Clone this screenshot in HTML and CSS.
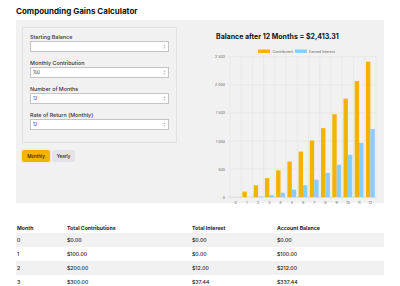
FILE: index.html
```html
<!DOCTYPE html>
<html lang="en">
<head>
  <meta charset="UTF-8" />
  <title>Compounding Gains Calculator</title>
  <link rel="stylesheet" href="styles.css">
</head>
<body>
  <h1 class="title">Compounding Gains Calculator</h1>

  <div class="panel">
    <div class="inputs-col">
      <div class="form-card">
        <div class="field">
          <label>Starting Balance</label>
          <div class="input"><span class="value"></span><svg class="spin" viewBox="0 0 4 7"><path d="M2 0.5 L3.5 2.6 H0.5 Z M2 6.5 L3.5 4.4 H0.5 Z"/></svg></div>
        </div>
        <div class="field">
          <label>Monthly Contribution</label>
          <div class="input"><span class="value">100</span><svg class="spin" viewBox="0 0 4 7"><path d="M2 0.5 L3.5 2.6 H0.5 Z M2 6.5 L3.5 4.4 H0.5 Z"/></svg></div>
        </div>
        <div class="field">
          <label>Number of Months</label>
          <div class="input"><span class="value">12</span><svg class="spin" viewBox="0 0 4 7"><path d="M2 0.5 L3.5 2.6 H0.5 Z M2 6.5 L3.5 4.4 H0.5 Z"/></svg></div>
        </div>
        <div class="field">
          <label>Rate of Return (Monthly)</label>
          <div class="input"><span class="value">12</span><svg class="spin" viewBox="0 0 4 7"><path d="M2 0.5 L3.5 2.6 H0.5 Z M2 6.5 L3.5 4.4 H0.5 Z"/></svg></div>
        </div>
      </div>

      <div class="toggle">
        <button class="tab active">Monthly</button>
        <button class="tab">Yearly</button>
      </div>
    </div>

    <div class="chart-col">
      <h2 class="chart-title">Balance after 12 Months = $2,413.31</h2>
      <svg class="chart" width="168" height="161" viewBox="210 42 168 161">
        <!-- legend -->
        <rect x="258" y="49.5" width="12" height="3.5" fill="#f5b301"/>
        <text class="legend" x="272.5" y="52.6">Contributed</text>
        <rect x="295" y="49.5" width="12" height="3.5" fill="#87cefa"/>
        <text class="legend" x="309" y="52.6">Earned Interest</text>

        <!-- horizontal grid -->
        <g class="grid">
          <line x1="228" x2="376" y1="56.7" y2="56.7"/>
          <line x1="228" x2="376" y1="84.8" y2="84.8"/>
          <line x1="228" x2="376" y1="112.9" y2="112.9"/>
          <line x1="228" x2="376" y1="141" y2="141"/>
          <line x1="228" x2="376" y1="169.1" y2="169.1"/>
        </g>
        <!-- vertical grid -->
        <g class="grid">
          <line x1="230" x2="230" y1="56.7" y2="199.5"/>
          <line x1="241.23" x2="241.23" y1="56.7" y2="199.5"/>
          <line x1="252.46" x2="252.46" y1="56.7" y2="199.5"/>
          <line x1="263.69" x2="263.69" y1="56.7" y2="199.5"/>
          <line x1="274.92" x2="274.92" y1="56.7" y2="199.5"/>
          <line x1="286.15" x2="286.15" y1="56.7" y2="199.5"/>
          <line x1="297.38" x2="297.38" y1="56.7" y2="199.5"/>
          <line x1="308.61" x2="308.61" y1="56.7" y2="199.5"/>
          <line x1="319.84" x2="319.84" y1="56.7" y2="199.5"/>
          <line x1="331.07" x2="331.07" y1="56.7" y2="199.5"/>
          <line x1="342.3" x2="342.3" y1="56.7" y2="199.5"/>
          <line x1="353.53" x2="353.53" y1="56.7" y2="199.5"/>
          <line x1="364.76" x2="364.76" y1="56.7" y2="199.5"/>
          <line x1="376" x2="376" y1="56.7" y2="199.5"/>
        </g>
        <line class="axis" x1="228" x2="376" y1="197.2" y2="197.2"/>

        <!-- y labels -->
        <g class="tick" text-anchor="end">
          <text x="225" y="58.2">2 500</text>
          <text x="225" y="86.3">2 000</text>
          <text x="225" y="114.4">1 500</text>
          <text x="225" y="142.5">1 000</text>
          <text x="225" y="170.6">500</text>
          <text x="225" y="198.7">0</text>
        </g>

        <!-- x labels -->
        <g class="tick" text-anchor="middle">
          <text x="235.6" y="203.5">0</text>
          <text x="246.8" y="203.5">1</text>
          <text x="258.1" y="203.5">2</text>
          <text x="269.3" y="203.5">3</text>
          <text x="280.5" y="203.5">4</text>
          <text x="291.8" y="203.5">5</text>
          <text x="303" y="203.5">6</text>
          <text x="314.2" y="203.5">7</text>
          <text x="325.4" y="203.5">8</text>
          <text x="336.7" y="203.5">9</text>
          <text x="347.9" y="203.5">10</text>
          <text x="359.1" y="203.5">11</text>
          <text x="370.4" y="203.5">12</text>
        </g>

        <!-- balance bars -->
        <g fill="#f5b301">
          <rect x="242.4" y="191.6" width="4.4" height="5.6"/>
          <rect x="253.7" y="185.3" width="4.4" height="11.9"/>
          <rect x="264.9" y="178.2" width="4.4" height="19"/>
          <rect x="276.1" y="170.3" width="4.4" height="26.9"/>
          <rect x="287.4" y="161.5" width="4.4" height="35.7"/>
          <rect x="298.6" y="151.6" width="4.4" height="45.6"/>
          <rect x="309.8" y="140.5" width="4.4" height="56.7"/>
          <rect x="321" y="128.1" width="4.4" height="69.1"/>
          <rect x="332.3" y="114.2" width="4.4" height="83"/>
          <rect x="343.5" y="98.6" width="4.4" height="98.6"/>
          <rect x="354.7" y="81.1" width="4.4" height="116.1"/>
          <rect x="366" y="61.6" width="4.4" height="135.6"/>
        </g>

        <!-- interest bars -->
        <g fill="#87cefa">
          <rect x="258.1" y="196.5" width="4.4" height="0.7"/>
          <rect x="269.3" y="195.1" width="4.4" height="2.1"/>
          <rect x="280.5" y="192.8" width="4.4" height="4.4"/>
          <rect x="291.8" y="189.6" width="4.4" height="7.6"/>
          <rect x="303" y="185.3" width="4.4" height="11.9"/>
          <rect x="314.2" y="179.8" width="4.4" height="17.4"/>
          <rect x="325.4" y="173" width="4.4" height="24.2"/>
          <rect x="336.7" y="164.7" width="4.4" height="32.5"/>
          <rect x="347.9" y="154.8" width="4.4" height="42.4"/>
          <rect x="359.1" y="142.9" width="4.4" height="54.3"/>
          <rect x="370.4" y="129" width="4.4" height="68.2"/>
        </g>
      </svg>
    </div>
  </div>

  <table class="results">
    <thead>
      <tr>
        <th class="c-month">Month</th>
        <th class="c-contrib">Total Contributions</th>
        <th class="c-interest">Total Interest</th>
        <th class="c-balance">Account Balance</th>
      </tr>
    </thead>
    <tbody>
      <tr><td>0</td><td>$0.00</td><td>$0.00</td><td>$0.00</td></tr>
      <tr><td>1</td><td>$100.00</td><td>$0.00</td><td>$100.00</td></tr>
      <tr><td>2</td><td>$200.00</td><td>$12.00</td><td>$212.00</td></tr>
      <tr><td>3</td><td>$300.00</td><td>$37.44</td><td>$337.44</td></tr>
    </tbody>
  </table>
</body>
</html>
```

FILE: styles.css
```css
* {
  box-sizing: border-box;
}

body {
  margin: 0;
  padding: 0;
  font-family: 'Inter', 'Noto Sans', sans-serif;
  background: #ffffff;
  color: #222;
}

.title {
  margin: 0;
  padding: 6px 16px 0;
  height: 20px;
  font-size: 8px;
  line-height: 11px;
  font-weight: 700;
  color: #111;
}

.panel {
  margin: 0 16px;
  height: 183px;
  padding: 7px 6px;
  background: #f1f1f1;
  display: flex;
  gap: 33px;
}

.inputs-col {
  width: 155px;
  flex-shrink: 0;
}

.form-card {
  height: 116px;
  border: 1px solid #e2e2e2;
  padding: 6px 7px 12px;
}

.field {
  margin-bottom: 8px;
}

.field label {
  display: block;
  height: 6px;
  line-height: 6px;
  margin-bottom: 1px;
  font-size: 5.4px;
  font-weight: 500;
  color: #333;
}

.input {
  height: 11px;
  background: #fff;
  border: 1px solid #c4c4c4;
  display: flex;
  align-items: center;
  padding: 0 2px 0 2px;
}

.input .value {
  flex: 1;
  font-size: 4.2px;
  color: #333;
}

.spin {
  width: 3px;
  height: 5px;
  fill: #b5b5b5;
}

.toggle {
  margin-top: 7px;
  display: flex;
  gap: 2px;
}

.tab {
  height: 12px;
  padding: 0;
  border: none;
  border-radius: 2px;
  font-family: inherit;
  font-size: 4.5px;
  font-weight: 500;
  color: #222;
  background: #e4e4e8;
  cursor: pointer;
}

.tab.active {
  width: 28px;
  background: #f5b301;
  box-shadow: 0 0 0 0.6px #fbe2a0;
}

.tab:not(.active) {
  width: 23px;
}

.chart-col {
  width: 168px;
}

.chart-title {
  margin: 0;
  padding: 5px 0 0 6px;
  height: 15px;
  font-size: 7px;
  line-height: 10px;
  font-weight: 700;
  color: #111;
}

.chart {
  display: block;
  overflow: visible;
}

.chart .grid line {
  stroke: #e2e2e2;
  stroke-width: 0.5;
}

.chart .axis {
  stroke: #cfcfcf;
  stroke-width: 0.6;
}

.chart .tick,
.chart .legend {
  font-family: 'Inter', sans-serif;
  font-size: 3.6px;
  fill: #666;
}

.results {
  margin: 19px 16px 0;
  width: 368px;
  border-collapse: collapse;
  font-size: 5.2px;
  font-weight: 500;
  color: #222;
}

.results th {
  text-align: left;
  font-weight: 700;
  height: 11px;
  padding: 0 1px;
}

.results td {
  height: 14px;
  padding: 0 1px;
}

.results tbody tr:nth-child(odd) {
  background: #f1f1f1;
}

.c-month { width: 50px; }
.c-contrib { width: 125px; }
.c-interest { width: 85px; }
.c-balance { width: 108px; }
```
